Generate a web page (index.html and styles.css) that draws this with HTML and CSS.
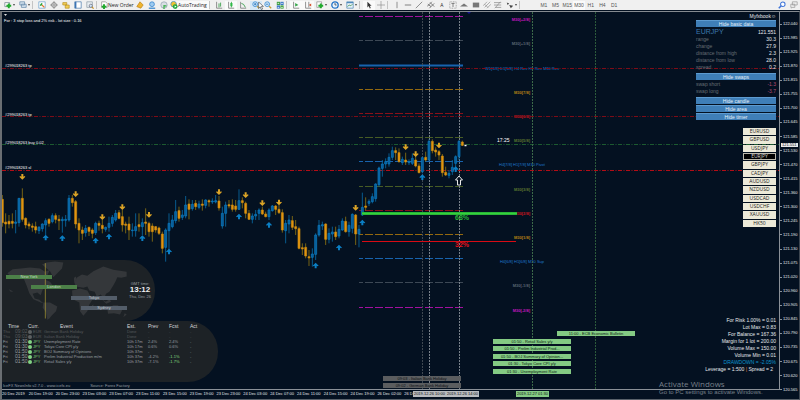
FILE: index.html
```
<!DOCTYPE html>
<html lang="en">
<head>
  <meta charset="UTF-8" />
  <meta name="viewport" content="width=device-width, initial-scale=1.0"/>
  <title>EURJPY M30</title>
  <link rel="stylesheet" href="styles.css">
</head>
<body>

  <header class="toolbar">
    <div class="group">
      <button class="tool drop" aria-label="New chart"><svg viewBox="0 0 10 10"><path d="M1 2h6v5H1z" fill="#fff" stroke="#7a8a96"/><path d="M6 3v6M3 6h6" stroke="#1faa2c" stroke-width="2.4"/></svg></button>
      <button class="tool drop" aria-label="Profiles"><svg viewBox="0 0 10 10"><path d="M1 1h6v4H1zM3 4h6v4H3z" fill="#d5e4f0" stroke="#6d8fae"/></svg></button>
    </div>
    <span class="sep"></span>
    <div class="group">
      <button class="tool" aria-label="Market watch"><svg viewBox="0 0 10 10"><path d="M1 1h8v8H1z" fill="#fff" stroke="#79a7cf"/><path d="M3 6l2-3" stroke="#27a33a" stroke-width="2"/><path d="M5 5l3 3" stroke="#e0762f" stroke-width="1.6"/></svg></button>
      <button class="tool" aria-label="Data window"><svg viewBox="0 0 10 10"><circle cx="5" cy="5" r="3" fill="none" stroke="#777"/><path d="M5 0v10M0 5h10" stroke="#777" stroke-width=".8"/></svg></button>
      <button class="tool" aria-label="Navigator"><svg viewBox="0 0 10 10"><path d="M1 2h5v3H1zM4 5h5v4H4z" fill="#f3cf53" stroke="#b48b22" stroke-width=".8"/></svg></button>
      <button class="tool" aria-label="Terminal"><svg viewBox="0 0 10 10"><path d="M1 1h8v8H1z" fill="#fff" stroke="#5c86b4"/><path d="M2 1v8" stroke="#3c74b4" stroke-width="2"/></svg></button>
      <button class="tool" aria-label="Strategy tester"><svg viewBox="0 0 10 10"><path d="M1 1h7v7H1z" fill="#e9eef2" stroke="#97a4ae"/><circle cx="6" cy="6" r="2" fill="#cfe6f5" stroke="#778"/><path d="M7.500 7.500L9.500 9.500" stroke="#c89426" stroke-width="1.4"/></svg></button>
    </div>
    <span class="sep"></span>
    <div class="group trade">
      <button class="text-tool new-order"><svg viewBox="0 0 10 10"><path d="M2 1h5l2 2v5H2z" fill="#fff" stroke="#999"/><path d="M5 4v6M2 7h6" stroke="#1faa2c" stroke-width="2.400"/></svg>New Order</button>
      <button class="tool" aria-label="MetaEditor"><svg viewBox="0 0 10 10"><path d="M5 1L9 5 6 9 1 7z" fill="#eeb42e" stroke="#b77b12" stroke-width=".8"/></svg></button>
      <button class="tool" aria-label="Account"><svg viewBox="0 0 10 10"><circle cx="5" cy="4" r="3" fill="#9ecbf0" stroke="#3b88cf"/><path d="M1 9h8" stroke="#3b88cf" stroke-width="1.600"/></svg></button>
      <button class="tool" aria-label="Signals"><svg viewBox="0 0 10 10"><circle cx="5" cy="5" r="4" fill="#d9dfe4" stroke="#9aa8b4"/><path d="M5 5v5M5 6h3" stroke="#3bb04a" stroke-width="1.500"/></svg></button>
      <button class="text-tool auto pressed"><svg viewBox="0 0 10 10"><circle cx="4.500" cy="4" r="3.500" fill="#f1c232" stroke="#4b93ba"/><circle cx="6.500" cy="7" r="3" fill="#1da83a"/><path d="M5.800 5.500v3l2.400-1.500z" fill="#fff"/></svg>AutoTrading</button>
    </div>
    <span class="sep"></span>
    <div class="group charts">
      <button class="tool" aria-label="Bar chart"><svg viewBox="0 0 10 10"><path d="M2 1v8h7" fill="none" stroke="#777"/><path d="M5 3v5M7 2v5" stroke="#27973a"/></svg></button>
      <button class="tool pressed" aria-label="Candlesticks"><svg viewBox="0 0 10 10"><path d="M2 1v8h7" fill="none" stroke="#777"/><path d="M5.500 1v7" stroke="#27973a"/><path d="M4.200 2.500h2.600v4H4.200z" fill="#2fba48"/></svg></button>
      <button class="tool" aria-label="Line chart"><svg viewBox="0 0 10 10"><path d="M2 1v8h7" fill="none" stroke="#777"/><path d="M3 3q3 0 5 5" fill="none" stroke="#27973a"/></svg></button>
    </div>
    <div class="group">
      <button class="tool hot" aria-label="Zoom in"><svg viewBox="0 0 10 10"><circle cx="4" cy="4" r="3" fill="#d3eafb" stroke="#3787cf"/><path d="M6.500 6.500L9 9" stroke="#c59b37" stroke-width="1.600"/><path d="M2.500 4h3M4 2.500v3" stroke="#2672b8"/></svg>
        <svg class="pointer" viewBox="0 0 10 10"><path d="M2 0v8l2-2 1.500 3.500 1.500-.7L5.500 5.500H8z" fill="#fff" stroke="#333" stroke-width=".7"/></svg></button>
      <button class="tool" aria-label="Zoom out"><svg viewBox="0 0 10 10"><circle cx="4" cy="4" r="3" fill="#d3eafb" stroke="#3787cf"/><path d="M6.500 6.500L9 9" stroke="#c59b37" stroke-width="1.600"/><path d="M2.500 4h3" stroke="#2672b8"/></svg></button>
      <button class="tool" aria-label="Tile windows"><svg viewBox="0 0 10 10"><path d="M1 1h4v4H1z" fill="#3f9f3f"/><path d="M5.500 1h4v4h-4z" fill="#3a78c4"/><path d="M1 5.500h4v4H1z" fill="#3a78c4"/><path d="M5.500 5.500h4v4h-4z" fill="#3f9f3f"/><path d="M2 3h2M6.500 3h2M2 8h2M6.500 8h2" stroke="#fff"/></svg></button>
    </div>
    <span class="sep"></span>
    <div class="group">
      <button class="tool pressed" aria-label="Auto scroll"><svg viewBox="0 0 10 10"><path d="M2 1v8h7" fill="none" stroke="#777"/><path d="M4 2.500l4 2.500-4 2z" fill="#34a548"/></svg></button>
      <button class="tool pressed" aria-label="Chart shift"><svg viewBox="0 0 10 10"><path d="M2 1v8h7M6 1v7" fill="none" stroke="#777"/><path d="M9 3L6 5l3 2z" fill="#d6532e"/></svg></button>
    </div>
    <div class="group">
      <button class="tool drop" aria-label="Indicators"><svg viewBox="0 0 10 10"><path d="M1 1h6v7H1z" fill="#fff" stroke="#999"/><path d="M6 3v6M3 6h6" stroke="#1faa2c" stroke-width="2.400"/></svg></button>
      <button class="tool drop" aria-label="Periods"><svg viewBox="0 0 10 10"><circle cx="5" cy="5" r="4" fill="#e8f3fc" stroke="#2172c6" stroke-width="1.600"/><path d="M5 2.500V5h2" fill="none" stroke="#345"/></svg></button>
      <button class="tool drop" aria-label="Templates"><svg viewBox="0 0 10 10"><path d="M1 1h8v8H1z" fill="#e9f3fa" stroke="#5f93bd"/><path d="M1 2h8" stroke="#4e88bb" stroke-width="1.500"/><path d="M2 7l2-2 2 1 2-2" fill="none" stroke="#3a8d47"/></svg></button>
    </div>
    <span class="sep"></span>
    <div class="group">
      <button class="tool pressed" aria-label="Cursor"><svg viewBox="0 0 10 10"><path d="M3 1v7l1.700-1.600L6 9.300l1.200-.6L6 6h2.200z" fill="#333"/></svg></button>
      <button class="tool" aria-label="Crosshair"><svg viewBox="0 0 10 10"><path d="M5 0v10M0 5h10" stroke="#888" stroke-width=".8"/></svg></button>
    </div>
    <span class="sep"></span>
    <div class="group draw">
      <button class="tool" aria-label="Vertical line"><svg viewBox="0 0 10 10"><path d="M5 1v8" stroke="#777"/></svg></button>
      <button class="tool" aria-label="Horizontal line"><svg viewBox="0 0 10 10"><path d="M1 5h8" stroke="#666"/></svg></button>
      <button class="tool" aria-label="Trendline"><svg viewBox="0 0 10 10"><path d="M1 9l8-8" stroke="#777"/></svg></button>
      <button class="tool" aria-label="Channel"><svg viewBox="0 0 10 10"><path d="M0 7l6-6M3 9l6-6M1 4l4 3M4 2l5 5" stroke="#666"/></svg></button>
      <button class="tool" aria-label="Text">A</button>
      <button class="tool" aria-label="Text label"><svg viewBox="0 0 10 10"><path d="M1 1h8v8H1z" fill="none" stroke="#888" stroke-dasharray="1 1"/><path d="M3 3h4M5 3v4.500" stroke="#666"/></svg></button>
      <button class="tool" aria-label="Triangle"><svg viewBox="0 0 10 10"><path d="M0 7l5-4 5 4z" fill="#777"/></svg></button>
      <button class="tool" aria-label="Rectangle"><svg viewBox="0 0 10 10"><path d="M1 2h8v6H1z" fill="#777"/></svg></button>
      <button class="tool" aria-label="Pitchfork"><svg viewBox="0 0 10 10"><path d="M0 6l5-5M2 8l7-7M5 9l5-5M2 4l4 4" stroke="#888" stroke-width=".8"/></svg></button>
      <button class="tool" aria-label="Fibonacci"><svg viewBox="0 0 10 10"><path d="M0 2h9M0 5h9M2 8h7M1 9l7-8" stroke="#888" stroke-width=".9"/></svg></button>
      <button class="tool drop" aria-label="Arrows"><svg viewBox="0 0 10 10"><path d="M1 2l3 1-2 2zM4 5l5 1-3 3z" fill="#444"/></svg></button>
    </div>
    <span class="sep"></span>
    <div class="group periods">
      <button class="tool">M1</button>
      <button class="tool">M5</button>
      <button class="tool">M15</button>
      <button class="tool pressed">M30</button>
      <button class="tool">H1</button>
      <button class="tool">H4</button>
      <button class="tool">D1</button>
    </div>
    <div class="group end">
      <button class="tool" aria-label="Search"><svg viewBox="0 0 10 10"><circle cx="6" cy="4" r="2.800" fill="#fff" stroke="#3e74d8" stroke-width="1.300"/><path d="M4 6L1 9" stroke="#3e74d8" stroke-width="2"/></svg></button>
      <button class="tool" aria-label="Messages"><svg viewBox="0 0 10 10"><path d="M3 1h6v4H3zM1 4h5v4H3L2 9V8H1z" fill="#eee" stroke="#999" stroke-width=".9"/></svg></button>
    </div>
  </header>

  <main class="window">
    <div class="plot">
      <svg class="drawing" aria-label="EURJPY M30 chart">
        <!-- drawn in window coordinates -->
        <g transform="translate(-2 -12)">
          <g id="grid"></g>
          <g id="candles" transform="translate(0 160) scale(.33333)"></g>
          <path d="M362 213.500h155" stroke="#1f9a35" stroke-width="3"/>
          <path d="M362 213.500h155" stroke="#35d23c" stroke-width="2"/>
          <path d="M362 241.500h154" stroke="#d90b14"/>
          <path d="M459 176l-3.500 4h2v5h3v-5h2z" fill="#06101f" stroke="#e8e8e8"/>
          <path d="M464.500 145.500h2" stroke="#fff" stroke-width="1.500"/>
          <path d="M4 14h3l-1.500 2z" fill="#ddd"/>
          <path d="M467 12h4l-2 2z" fill="#14148c"/>
          <g class="percent">
            <text x="455" y="220" fill="#27b83a">68%</text>
            <text x="455" y="247" fill="#e3101a">32%</text>
          </g>
          <g class="order">
            <text x="4" y="22">For : 3 stop loss and 2% risk - lot size : 0.16</text>
            <text x="5" y="67">#299018263 tp</text>
            <text x="5" y="116">#299018263 tp</text>
            <text x="5" y="144">#299018263 buy 0.02</text>
            <text x="5" y="169">#299018263 sl</text>
            <text class="clock" x="497" y="142">17:25</text>
          </g>
        </g>
      </svg>

      <div class="events upcoming">
        <p class="later">11:00 - ECB Economic Bulletin</p>
        <p>01:50 - Retail Sales y/y</p>
        <p>01:50 - Prelim Industrial Prod...</p>
        <p>01:50 - BOJ Summary of Opinion...</p>
        <p>01:30 - Tokyo Core CPI y/y</p>
        <p>01:30 - Unemployment Rate</p>
      </div>
      <div class="events past">
        <p>09:03 - Italian Bank Holiday</p>
        <p>09:02 - German Bank Holiday</p>
      </div>

      <section class="news">
        <div class="world">
          <svg class="map" viewBox="6 33 459 182">
            <path d="M22 72L38 60 62 58 90 55 120 58 135 68 150 62 142 78 128 88 150 98 158 108 140 112 128 122 122 138 112 130 98 134 104 148 118 152 130 162 122 160 100 150 88 132 80 110 72 90 55 78 36 84z"/>
            <path d="M126 46L140 40 165 37 190 40 186 58 172 72 160 84 150 66z"/>
            <path d="M130 160L150 160 172 172 168 186 156 198 148 208 142 212 138 190 128 176z"/>
            <path d="M222 98L232 84 246 76 262 80 280 66 310 52 340 62 380 68 380 82 364 86 352 84 346 98 338 112 328 128 318 134 312 148 302 136 290 142 284 128 268 124 262 112 250 116 228 112z"/>
            <path d="M216 124L240 118 262 124 272 142 282 144 268 166 262 186 250 200 240 186 238 160 218 150z"/>
            <path d="M322 178L340 168 354 168 366 184 360 196 342 192 324 194z"/>
            <path d="M305 150l12 8 12-8 4 8-14 6zM374 192l6 4-10 8zM222 86l6-4 2 10-8 4zM276 168l5-2-4 14zM26 120l8 4 6 3-8 1zM40 152l14 4z"/>
            <path class="now" d="M136 42v166"/>
          </svg>
          <span class="session ny open">New York</span>
          <span class="session london open">London</span>
          <span class="session tokyo">Tokyo</span>
          <span class="session sydney">Sydney</span>
          <div class="gmt">GMT time:<strong>13:12</strong>Thu, Dec 26</div>
        </div>
        <div class="calendar">
          <table>
            <thead>
              <tr><th class="day" colspan="2">Time</th><th class="curr">Curr.</th><th class="event">Event</th><th class="num">Est.</th><th class="num">Prev</th><th class="num">Fcst</th><th>Act</th></tr>
            </thead>
            <tbody>
              <tr class="done"><td>Thu</td><td>09:02</td><td class="curr">EUR</td><td>German Bank Holiday</td><td>Done</td><td>-</td><td>-</td><td>-</td></tr>
              <tr class="done"><td>Thu</td><td>09:03</td><td class="curr">EUR</td><td>Italian Bank Holiday</td><td>Done</td><td>-</td><td>-</td><td>-</td></tr>
              <tr><td>Fri</td><td>01:30</td><td class="curr">JPY</td><td>Unemployment Rate</td><td>10h 17m</td><td>2.4%</td><td>2.4%</td><td>-</td></tr>
              <tr><td>Fri</td><td>01:30</td><td class="curr">JPY</td><td>Tokyo Core CPI y/y</td><td>10h 17m</td><td>0.6%</td><td>0.6%</td><td>-</td></tr>
              <tr><td>Fri</td><td>01:50</td><td class="curr">JPY</td><td>BOJ Summary of Opinions</td><td>10h 37m</td><td>-</td><td>-</td><td>-</td></tr>
              <tr><td>Fri</td><td>01:50</td><td class="curr">JPY</td><td>Prelim Industrial Production m/m</td><td>10h 37m</td><td>-4.2%</td><td class="better">-1.1%</td><td>-</td></tr>
              <tr><td>Fri</td><td>01:50</td><td class="curr">JPY</td><td>Retail Sales y/y</td><td>10h 37m</td><td>-7.1%</td><td class="better">-1.7%</td><td>-</td></tr>
            </tbody>
          </table>
        </div>
        <footer class="credits"><span>IceFX NewsInfo v2.7.0 - www.icefx.eu</span><span>Source: Forex Factory</span></footer>
      </section>

      <aside class="side">
        <p class="expert">Myfxbook<span>☺</span></p>
        <div class="info">
          <button>Hide basic data</button>
          <dl>
            <div class="pair"><dt>EURJPY</dt><dd>121.551</dd></div>
            <div><dt>range</dt><dd>30.3</dd></div>
            <div><dt>change</dt><dd>27.9</dd></div>
            <div><dt>distance from high</dt><dd>2.3</dd></div>
            <div><dt>distance from low</dt><dd>28.0</dd></div>
            <div><dt>spread</dt><dd>0.2</dd></div>
          </dl>
          <button>Hide swaps</button>
          <dl>
            <div class="minus"><dt>swap short</dt><dd>-1.3</dd></div>
            <div class="minus"><dt>swap long</dt><dd>-3.7</dd></div>
          </dl>
          <div class="stack">
            <button>Hide candle</button>
            <button>Hide area</button>
            <button>Hide timer</button>
          </div>
        </div>
        <div class="symbols">
          <button>EURUSD</button>
          <button>GBPUSD</button>
          <button>USDJPY</button>
          <button class="active">EURJPY</button>
          <button>GBPJPY</button>
          <button>CADJPY</button>
          <button>AUDUSD</button>
          <button>NZDUSD</button>
          <button>USDCAD</button>
          <button>USDCHF</button>
          <button>XAUUSD</button>
          <button>HK50</button>
        </div>
      </aside>

      <div class="risk">
        <p>For Risk 1.00% = 0.01</p>
        <p>Lot Max = 0.83</p>
        <p>For Balance = 167.36</p>
        <p>Margin for 1 lot = 200.00</p>
        <p>Volume Max = 150.00</p>
        <p>Volume Min = 0.01</p>
        <p class="drawdown">DRAWDOWN = -2.05%</p>
        <p class="leverage">Leverage = 1:500 <b>|</b> Spread = 2</p>
      </div>
    </div>

    <div class="prices" id="prices"><span class="last">121.551</span></div>
    <div class="times" id="times">
      <span class="mark first">2019.12.26 10:00</span>
      <span class="mark second">2019.12.26 14:00</span>
      <span class="mark next">2019.12.27 01:30</span>
    </div>
  </main>

  <div class="activate">
    <p class="title">Activate Windows</p>
    <p>Go to PC settings to activate Windows.</p>
  </div>

  <script src="chart.js"></script>
</body>
</html>
```
FILE: styles.css
```
* {
  box-sizing: border-box;
}

body {
  margin: 0;
  height: 100vh;
  display: flex;
  flex-direction: column;
  overflow: hidden;
  background: #041121;
  color: #e6e9ec;
  font-family: "Liberation Sans", Arial, sans-serif;
  font-size: 4px;
  line-height: 5px;
}

p, dl, dd {
  margin: 0;
}

button {
  margin: 0;
  padding: 0;
  border: 0;
  background: none;
  color: inherit;
  font: inherit;
}

/* toolbar */
.toolbar {
  flex: none;
  display: flex;
  align-items: center;
  height: 10px;
  padding-left: 2px;
  background: #f0f0f0;
  color: #222;
  font-family: "Open Sans", "Noto Sans", sans-serif;
  font-size: 5px;
}

.group {
  display: flex;
  flex: none;
}

.trade {
  width: 109px;
}

.charts {
  width: 37px;
}

.draw {
  width: 128px;
}

.periods {
  width: 82px;
  margin-left: 15px;
  font-family: "Liberation Sans", Arial, sans-serif;
  color: #555;
}

.end {
  margin-left: auto;
}

.sep {
  flex: none;
  width: 4px;
  height: 8px;
  border-left: 1px solid #c4c4c4;
}

.tool {
  width: 12px;
  min-width: 0;
  display: flex;
  position: relative;
  align-items: center;
  justify-content: center;
  height: 9px;
}

.tool svg, .text-tool svg {
  flex: none;
  width: 8px;
  height: 8px;
}

.drop {
  flex: none;
  width: 15px;
  padding-left: 2px;
  justify-content: flex-start;
  gap: 1px;
}

.drop::after {
  content: "";
  border: 1px solid transparent;
  border-top: 2px solid #444;
  border-bottom: 0;
}

.pressed {
  background: #fafafa;
}

.hot {
  background: #d6e8f6;
}

.tool .pointer {
  position: absolute;
  left: 7px;
  top: 1px;
  z-index: 1;
}

.text-tool {
  display: flex;
  flex: none;
  align-items: center;
  height: 9px;
  white-space: nowrap;
}

.new-order {
  width: 34px;
}

.auto {
  width: 39px;
}

/* chart window */
.window {
  flex: 1;
  min-height: 0;
  display: grid;
  grid-template-columns: minmax(0, 1fr) 19px;
  grid-template-rows: minmax(0, 1fr) 9px;
  margin-top: 1px;
  border-top: 1px solid #858a90;
  border-left: 2px solid #6a6e72;
  border-right: 1px solid #3d4650;
  border-bottom: 1px solid #59616a;
}

.plot {
  position: relative;
  overflow: hidden;
  border-right: 1px solid #8b9198;
  border-bottom: 1px solid #8b9198;
}

.drawing {
  display: block;
  width: 100%;
  height: 100%;
  overflow: visible;
}

.order {
  fill: #fff;
}

.level {
  font-weight: bold;
}

.clock {
  font-size: 5px;
}

.percent {
  font-size: 7px;
  font-weight: bold;
}

/* calendar strips on the chart */
.events {
  position: absolute;
  display: flex;
  flex-direction: column;
  justify-content: space-between;
}

.events p {
  width: 78px;
  height: 5px;
  background: #84ca83;
  color: #0b2413;
  text-align: center;
  white-space: nowrap;
}

.upcoming {
  left: 491px;
  bottom: 15px;
  height: 43px;
}

.events .later {
  margin-left: 64px;
}

.past {
  left: 381px;
  bottom: 1px;
  height: 12px;
}

.past p {
  background: #5b5d5f;
  color: #0d1115;
}

/* news info */
.news {
  position: absolute;
  left: 0;
  bottom: 0;
  width: 216px;
  color: #999fa2;
}

.world {
  position: relative;
  width: 153px;
  height: 61px;
  border-radius: 0 30px 30px 0;
  background: #1d2226;
}

.map {
  display: block;
  width: 153px;
  height: 61px;
  fill: #34373a;
}

.map .now {
  stroke: #b5a436;
  stroke-width: 2;
}

.session {
  position: absolute;
  width: 46px;
  height: 4px;
  line-height: 4px;
  background: #535d69;
  color: #c3c9cf;
  text-align: center;
}

.open {
  background: #4c8048;
  color: #c4dfc1;
}

.ny {
  left: 4px;
  top: 15px;
}

.london {
  left: 29px;
  top: 25px;
}

.tokyo {
  left: 69px;
  top: 36px;
}

.sydney {
  left: 79px;
  top: 46px;
}

.gmt {
  position: absolute;
  right: 2px;
  top: 21px;
  width: 26px;
  text-align: center;
}

.gmt strong {
  display: block;
  font-size: 8px;
  line-height: 8px;
  color: #eceef0;
}

.calendar {
  height: 61px;
  padding-top: 2px;
  border-radius: 0 30px 30px 0;
  background: #1d2226;
}

table {
  width: 200px;
  border-collapse: collapse;
  table-layout: fixed;
}

th, td {
  padding: 0;
  height: 5px;
  text-align: left;
  white-space: nowrap;
}

th {
  height: 6px;
  font-size: 5px;
  font-weight: normal;
  color: #d3d6d8;
}

th.day {
  width: 26px;
  padding-left: 6px;
}

td:first-child {
  padding-left: 1px;
}

th.curr {
  width: 16px;
}

th.event {
  width: 83px;
  padding-left: 16px;
}

th.num {
  width: 21px;
}

td:nth-child(2) {
  font-size: 5px;
}

td.curr {
  color: #7cc477;
}

td.curr::before {
  content: "";
  display: inline-block;
  width: 4px;
  height: 4px;
  margin-right: 1px;
  border-radius: 50%;
  background: #82d283;
  vertical-align: middle;
}

.better {
  color: #84dc82;
}

.done td {
  color: #56595c;
}

.done td.curr::before {
  background: #5c5f61;
}

.credits {
  display: flex;
  gap: 20px;
  height: 7px;
  padding-left: 1px;
  line-height: 7px;
}

/* right hand panels */
.side {
  position: absolute;
  right: 3px;
  top: 1px;
  display: flex;
  flex-direction: column;
  align-items: flex-end;
  font-size: 5px;
}

.expert {
  line-height: 7px;
}

.info {
  width: 80px;
  line-height: 7px;
}

.info button {
  display: block;
  width: 100%;
  height: 7px;
  background: #3f7fb8;
  border-top: 1px solid #5d9bd0;
  color: #e6eff7;
  line-height: 6px;
}

.info dl {
  padding: 1px 0 2px;
}

.info dl div {
  display: flex;
  justify-content: space-between;
}

.info dt {
  color: #666d74;
}

.info .pair {
  line-height: 8px;
}

.info .pair dt {
  font-size: 7px;
  color: #3d79ad;
}

.info .minus dd {
  color: #b84e72;
}

.stack {
  display: grid;
  gap: 1px;
}

.symbols {
  display: grid;
  grid-auto-rows: 1fr;
  gap: 1px;
  width: 33px;
  height: 99px;
  margin-top: 8px;
  font-family: "Open Sans", "Noto Sans", sans-serif;
}

.symbols button {
  background: #ece9d8;
  color: #222;
  line-height: 7px;
}

.symbols .active {
  border: 1px solid #b9b7ab;
  background: #000;
  color: #d8d8d8;
  line-height: 5px;
}

.risk {
  position: absolute;
  right: 3px;
  bottom: 16px;
  font-size: 5px;
  line-height: 7px;
  text-align: right;
}

.drawdown {
  color: #0c95cf;
}

.leverage {
  padding-right: 3px;
}

.leverage b {
  font-weight: normal;
  color: #e07b28;
}

/* scales */
.prices {
  position: relative;
  display: flex;
  flex-direction: column;
  justify-content: space-between;
  grid-row: span 2;
  padding: 10px 0 7px;
}

.prices span {
  display: flex;
  align-items: center;
  gap: 1px;
  line-height: 4px;
}

.prices span::before {
  content: "";
  width: 2px;
  height: 1px;
  background: #8b9198;
}

.prices .last {
  position: absolute;
  left: 1px;
  top: 131px;
  width: 17px;
  padding-left: 1px;
  background: #e8eaec;
  color: #111;
}

.prices .last::before {
  content: none;
}

.times {
  position: relative;
  display: flex;
  overflow: hidden;
  line-height: 8px;
}

.times span {
  flex: 0 0 calc(100% / 29);
  white-space: nowrap;
}

.times .mark {
  position: absolute;
  top: 1px;
  width: 33px;
  background: #b9bcbf;
  color: #111;
  line-height: 6px;
  text-align: center;
}

.times .first {
  left: 411px;
}

.times .second {
  left: 444px;
}

.times .next {
  left: 514px;
  background: #84ca83;
}

/* system watermark */
.activate {
  position: absolute;
  right: 30px;
  bottom: 4px;
  width: 111px;
  color: #78808a;
  font-size: 6px;
  line-height: 7px;
  white-space: nowrap;
}

.activate .title {
  font-family: "Open Sans", "Noto Sans", sans-serif;
  font-size: 8px;
  line-height: 10px;
}
```
FILE: chart.js
```
const BLUE = "#0b7fc4";
const ORANGE = "#e6960f";

// high, body top, body bottom, low, b = up / o = down
const candles = `105 118 188 200 o,160 186 192 220 o,165 184 192 205 o,160 184 190 205 o,150 186 190 220 b,115 115 188 200 b,85 115 178 185 o,172 175 195 205 o,185 192 198 208 o,190 198 202 215 o,
185 200 210 220 o,198 202 212 222 b,190 192 206 215 b,175 182 195 225 b,175 178 190 200 o,160 167 185 190 b,160 167 178 190 o,165 178 182 210 o,170 178 182 218 b,165 178 181 200 b,
105 115 180 185 b,105 115 128 140 o,120 125 192 205 o,175 190 210 250 o,200 210 220 240 o,195 205 218 230 b,200 202 214 228 o,205 210 220 235 o,185 190 218 225 b,182 190 196 212 o,
180 196 206 220 o,200 202 208 215 b,170 190 202 215 b,165 172 190 200 b,150 160 180 185 b,150 158 175 178 o,150 170 195 215 o,185 192 196 220 o,170 192 210 240 o,190 210 212 230 b,
160 200 212 230 b,160 194 200 215 o,175 188 200 225 b,145 186 190 225 o,185 190 215 230 o,190 198 215 245 o,198 200 210 218 o,200 204 220 225 o,215 222 265 280 o,205 210 262 305 b,
160 190 212 270 b,165 180 200 205 b,120 155 182 190 b,140 152 175 185 o,150 165 172 180 b,108 135 168 175 b,118 132 148 178 o,120 133 146 152 b,120 130 140 150 o,122 132 142 148 b,
118 132 136 152 o,118 120 136 145 b,118 122 126 140 o,115 123 126 132 b,105 122 126 130 b,108 123 144 152 o,140 160 198 206 b,125 135 160 200 b,120 134 138 145 o,118 135 148 155 o,
120 138 148 155 o,88 122 148 150 b,112 122 128 145 o,125 130 160 175 o,150 160 178 180 o,160 168 178 190 b,150 163 168 180 b,145 150 160 180 b,140 150 162 165 o,155 162 170 172 o,
145 150 170 180 b,135 138 152 155 b,135 138 148 165 o,135 148 158 162 o,148 158 210 218 o,180 190 212 250 b,165 180 192 220 b,168 182 202 210 o,180 200 206 225 o,200 206 265 268 o,
250 263 267 285 o,250 262 288 295 o,270 290 294 318 o,265 282 292 320 b,220 225 283 300 b,180 196 225 230 b,185 194 198 210 b,190 192 238 255 o,205 220 238 250 b,200 216 222 245 b,
200 216 230 240 o,195 208 228 235 b,175 183 210 212 b,170 184 215 218 o,185 196 215 230 b,160 163 205 220 b,162 165 222 255 o,195 208 222 262 b,98 142 165 168 b,112 138 142 152 o,
118 124 130 138 b,100 110 125 130 b,70 72 116 125 b,20 24 74 80 b,0 12 25 50 b,-5 5 12 25 b,-20 -8 12 20 b,-40 -28 -8 0 b,-38 -28 -22 0 o,-35 -22 5 8 o,
-10 -2 8 15 b,-22 0 6 15 o,-2 5 8 15 b,-20 -5 10 15 b,-15 0 18 22 o,10 18 38 40 o,-10 -7 35 40 b,-25 -8 0 5 o,-62 -56 0 2 b,-62 -56 -28 -20 o,
-38 -30 -24 -10 o,-30 -25 -15 0 o,-18 -12 38 50 o,20 37 45 48 o,30 40 46 55 b,0 22 35 45 b,-14 -10 10 35 b,-60 -56 -10 0 b,-58 -54 -44 -42 o`;

const sells = [[67, 50], [227, 102], [307, 171], [367, 141], [447, 164], [657, 96], [737, 105], [787, 129], [837, 127], [1067, 143], [1217, -39], [1247, -18], [1317, -44]];
const buys = [[137, 233], [187, 235], [287, 242], [327, 230], [427, 235], [507, 275], [717, 170], [807, 195], [947, 317], [1017, 263], [1087, 188], [1267, 52], [1367, 28]];

let out = "";
candles.split(",").forEach((row, i) => {
  const [hi, top, bot, lo, dir] = row.trim().split(" ");
  const x = 7 + i * 10;
  const up = dir === "b";
  out += `<path d="M${x} ${hi}V${lo}" stroke="${up ? "#086aa5" : "#8d7412"}" stroke-width="2.500"/>`;
  out += `<path d="M${x - 3} ${top}h6V${bot}h-6z" fill="${up ? "#0a5c98" : ORANGE}" stroke="${up ? BLUE : "#c98a12"}" stroke-width="2"/>`;
});
sells.forEach(([x, y]) => {
  out += `<path d="M${x} ${y + 9}l-9-9 3-2 3 2v-8h6v8l3-2 3 2z" fill="#dca426"/>`;
});
buys.forEach(([x, y]) => {
  out += `<path d="M${x} ${y - 9}l-9 9 3 2 3-2v8h6v-8l3 2 3-2z" fill="${BLUE}"/>`;
});
document.getElementById("candles").innerHTML = out;

// level name, line color, label color
const levels = [
  ["M30[+2/8]", "#a3109f", "#c416bf"], ["M30[+1/8]", "#3d4855", "#5a6673"], ["W1[3/8] D1[5/8] H4 Res H1 Res M30 Res", "#1763ad", "#1f78cf"],
  ["M30[7/8]", "#94690f", "#b98414"], ["M30[6/8]", "#8a1119", "#c9161f"], ["M30[5/8]", "#475c25", "#5c7730"], ["H4[7/8] H1[7/8] M30 Pivot", "#1763ad", "#1f78cf"],
  ["M30[3/8]", "#475c25", "#5c7730"], ["M30[2/8]", "#8a1119", "#c9161f"], ["M30[1/8]", "#94690f", "#b98414"], ["H4[6/8] H1[6/8] M30 Sup", "#1763ad", "#1f78cf"],
  ["M30[-1/8]", "#3d4855", "#5a6673"], ["M30[-2/8]", "#a3109f", "#c416bf"]
];
let grid = "";
levels.forEach(([name, line, label], i) => {
  const y = Math.floor(16.6 + i * 24.2) + 0.5;
  const solid = i === 2;
  const wide = name.length > 10;
  grid += `<path d="M359 ${y}h104" stroke="${line}" stroke-width="${solid ? 2 : 1}" ${solid ? "" : 'stroke-dasharray="8 2" stroke-dashoffset="4"'}/>`;
  grid += `<text class="${wide ? "" : "level"}" x="${wide ? 522 : 530}" y="${y + 4}" fill="${label}" text-anchor="${wide ? "middle" : "end"}">${name}</text>`;
});

// order lines
[[68.5, "#7d0c17"], [116.5, "#7d0c17"], [144.5, "#1c5a30"], [170.5, "#b30d16"]].forEach(([y, color]) => {
  grid += `<path d="M2 ${y}H4000" stroke="${color}" stroke-dasharray="4 1.500 1 1.500"/>`;
});

// vertical marks
[[422.5, "#3f4851"], [429.5, "#79818a"], [459.5, "#79818a"], [532.5, "#3c6a49"], [595.5, "#2c5a3b"]].forEach(([x, color]) => {
  grid += `<path d="M${x} 12V4000" stroke="${color}" stroke-dasharray="2 1"/>`;
});
document.getElementById("grid").innerHTML = grid;

const prices = ["122.040", "121.985", "121.925", "121.870", "121.815", "121.755", "121.700", "121.645", "121.585", "121.530", "121.470", "121.415", "121.360", "121.300", "121.245", "121.190", "121.130", "121.075", "121.020", "120.960", "120.905", "120.845", "120.790", "120.735", "120.675", "120.620", "120.565"];
document.getElementById("prices").insertAdjacentHTML("afterbegin", prices.map(p => `<span>${p}</span>`).join(""));

const times = ["20 Dec 2019", "20 Dec 19:00", "20 Dec 23:00", "23 Dec 03:00", "23 Dec 07:00", "23 Dec 11:00", "23 Dec 15:00", "23 Dec 19:00", "23 Dec 23:00", "24 Dec 03:00", "24 Dec 07:00", "24 Dec 11:00", "24 Dec 15:00", "24 Dec 19:00", "26 Dec 02:00", "26 D"];
document.getElementById("times").insertAdjacentHTML("afterbegin", times.map(t => `<span>${t}</span>`).join(""));
```
